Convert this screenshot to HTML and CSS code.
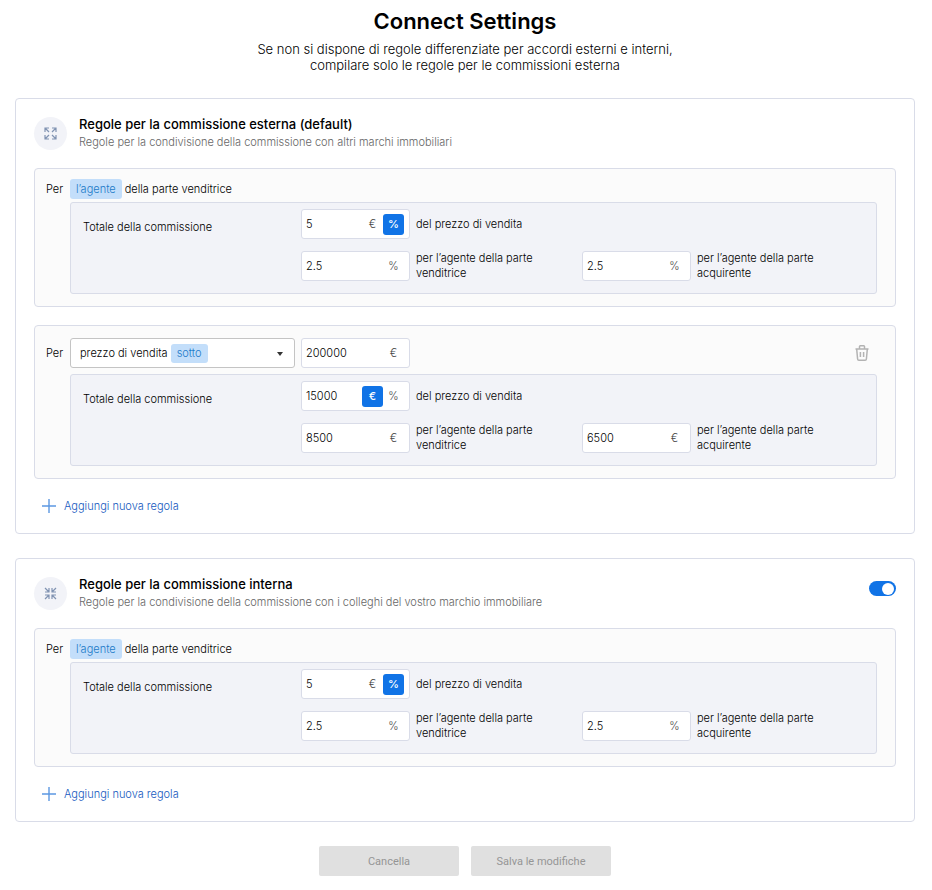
FILE: index.html
```html
<!DOCTYPE html>
<html lang="it">
<head>
<meta charset="utf-8">
<meta name="viewport" content="width=device-width, initial-scale=1">
<title>Connect Settings</title>
<link rel="stylesheet" href="styles.css">
</head>
<body>
<main class="page">
  <header class="intro">
    <h1>Connect Settings</h1>
    <p>Se non si dispone di regole differenziate per accordi esterni e interni,<br>compilare solo le regole per le commissioni esterna</p>
  </header>

  <section class="card">
    <div class="card-head">
      <span class="card-icon">
        <svg width="13" height="13" viewBox="0 0 13 13" aria-hidden="true"><path d="M1 5V1h4M1 1l4 4M8 1h4v4M12 1L8 5M1 8v4h4M1 12l4-4M12 8v4H8M12 12L8 8"/></svg>
      </span>
      <div class="card-titles">
        <h2>Regole per la commissione esterna (default)</h2>
        <p>Regole per la condivisione della commissione con altri marchi immobiliari</p>
      </div>
    </div>

    <div class="rule">
      <div class="rule-head">
        <span class="per">Per</span>
        <span class="chip">l’agente</span>
        <span class="after-chip">della parte venditrice</span>
      </div>
      <div class="panel">
        <label class="panel-label" for="ext1-total">Totale della commissione</label>
        <div class="field total">
          <div class="amount">
            <input id="ext1-total" type="text" value="5">
            <button type="button" class="unit" aria-pressed="false">€</button>
            <button type="button" class="unit active" aria-pressed="true">%</button>
          </div>
          <span class="field-text">del prezzo di vendita</span>
        </div>
        <div class="field seller">
          <div class="amount"><input id="ext1-seller" type="text" value="2.5"><span class="unit">%</span></div>
          <label class="field-text" for="ext1-seller">per l’agente della parte venditrice</label>
        </div>
        <div class="field">
          <div class="amount"><input id="ext1-buyer" type="text" value="2.5"><span class="unit">%</span></div>
          <label class="field-text" for="ext1-buyer">per l’agente della parte acquirente</label>
        </div>
      </div>
    </div>

    <div class="rule">
      <div class="rule-head tall">
        <label class="per" for="condition">Per</label>
        <div class="condition">
          <select id="condition">
            <option selected>prezzo di vendita sotto</option>
            <option>prezzo di vendita sopra</option>
          </select>
          <span class="condition-value" aria-hidden="true">prezzo di vendita <span class="chip small">sotto</span></span>
          <svg class="caret" width="6" height="4" viewBox="0 0 6 4" aria-hidden="true"><path d="M0 0h6L3 4z"/></svg>
        </div>
        <div class="amount"><input type="text" value="200000" aria-label="Prezzo di vendita"><span class="unit">€</span></div>
        <button type="button" class="delete" aria-label="Elimina regola">
          <svg width="14" height="16" viewBox="0 0 14 16" aria-hidden="true"><path d="M.5 4h13M4.5 3.8V1.6q0-.8.8-.8h3.4q.8 0 .8.8v2.2M1.7 4.2l.9 9.8q.1 1.2 1.3 1.2h6.2q1.2 0 1.3-1.2l.9-9.8M5.4 7v5M8.6 7v5"/></svg>
        </button>
      </div>
      <div class="panel">
        <label class="panel-label" for="ext2-total">Totale della commissione</label>
        <div class="field total">
          <div class="amount">
            <input id="ext2-total" type="text" value="15000">
            <button type="button" class="unit active" aria-pressed="true">€</button>
            <button type="button" class="unit" aria-pressed="false">%</button>
          </div>
          <span class="field-text">del prezzo di vendita</span>
        </div>
        <div class="field seller">
          <div class="amount"><input id="ext2-seller" type="text" value="8500"><span class="unit">€</span></div>
          <label class="field-text" for="ext2-seller">per l’agente della parte venditrice</label>
        </div>
        <div class="field">
          <div class="amount"><input id="ext2-buyer" type="text" value="6500"><span class="unit">€</span></div>
          <label class="field-text" for="ext2-buyer">per l’agente della parte acquirente</label>
        </div>
      </div>
    </div>

    <button type="button" class="add">
      <svg width="14" height="14" viewBox="0 0 14 14" aria-hidden="true"><path d="M7 0v14M0 7h14"/></svg>
      Aggiungi nuova regola
    </button>
  </section>

  <section class="card">
    <div class="card-head">
      <span class="card-icon">
        <svg width="13" height="13" viewBox="0 0 13 13" aria-hidden="true"><path d="M5 1v4H1M5 5L1 1M8 1v4h4M8 5l4-4M5 12V8H1M5 8l-4 4M8 12V8h4M8 8l4 4"/></svg>
      </span>
      <div class="card-titles">
        <h2>Regole per la commissione interna</h2>
        <p>Regole per la condivisione della commissione con i colleghi del vostro marchio immobiliare</p>
      </div>
      <input class="switch" type="checkbox" role="switch" checked aria-label="Regole per la commissione interna">
    </div>

    <div class="rule">
      <div class="rule-head">
        <span class="per">Per</span>
        <span class="chip">l’agente</span>
        <span class="after-chip">della parte venditrice</span>
      </div>
      <div class="panel">
        <label class="panel-label" for="int-total">Totale della commissione</label>
        <div class="field total">
          <div class="amount">
            <input id="int-total" type="text" value="5">
            <button type="button" class="unit" aria-pressed="false">€</button>
            <button type="button" class="unit active" aria-pressed="true">%</button>
          </div>
          <span class="field-text">del prezzo di vendita</span>
        </div>
        <div class="field seller">
          <div class="amount"><input id="int-seller" type="text" value="2.5"><span class="unit">%</span></div>
          <label class="field-text" for="int-seller">per l’agente della parte venditrice</label>
        </div>
        <div class="field">
          <div class="amount"><input id="int-buyer" type="text" value="2.5"><span class="unit">%</span></div>
          <label class="field-text" for="int-buyer">per l’agente della parte acquirente</label>
        </div>
      </div>
    </div>

    <button type="button" class="add">
      <svg width="14" height="14" viewBox="0 0 14 14" aria-hidden="true"><path d="M7 0v14M0 7h14"/></svg>
      Aggiungi nuova regola
    </button>
  </section>

  <footer class="actions">
    <button type="button" disabled>Cancella</button>
    <button type="button" disabled>Salva le modifiche</button>
  </footer>
</main>
</body>
</html>
```
FILE: styles.css
```css
* {
  box-sizing: border-box;
}

body {
  margin: 0;
  background: #fff;
  color: #000;
  font-family: Inter, "Liberation Sans", sans-serif;
  font-size: 11px;
  font-weight: 300;
  line-height: 15px;
}

h1, h2, p {
  margin: 0;
}

button, input, select {
  margin: 0;
  padding: 0;
  border: 0;
  background: none;
  color: inherit;
  font: inherit;
}

.page {
  display: flex;
  flex-direction: column;
  gap: 24px;
  padding: 6px 17px 14px 15px;
}

.intro {
  padding-bottom: 1px;
  text-align: center;
}

.intro h1 {
  font-size: 22px;
  font-weight: 600;
  line-height: 30px;
}

.intro p {
  margin-top: 5px;
  font-size: 13px;
  line-height: 16px;
}

.card {
  display: flex;
  flex-direction: column;
  gap: 18px;
  padding: 18px;
  border: 1px solid #d9dce8;
  border-radius: 4px;
}

.card-head {
  display: flex;
  gap: 12px;
}

.card-icon {
  display: flex;
  flex: none;
  align-items: center;
  justify-content: center;
  width: 33px;
  height: 33px;
  border-radius: 50%;
  background: #f2f3f8;
}

.card-icon svg {
  fill: none;
  stroke: #8093b2;
  stroke-width: 1.2;
}

.card-titles {
  flex: 1;
}

.card-titles h2 {
  font-size: 13px;
  font-weight: 500;
  line-height: 14px;
}

.card-titles p {
  margin-top: 4px;
  color: #666;
}

.switch {
  position: relative;
  appearance: none;
  width: 27px;
  height: 15px;
  margin-top: 4px;
  border-radius: 8px;
  background: #b5bac8;
}

.switch:checked {
  background: #1073e6;
}

.switch::before {
  content: "";
  position: absolute;
  top: 2px;
  left: 2px;
  width: 12px;
  height: 12px;
  border-radius: 50%;
  background: #fff;
}

.switch:checked::before {
  left: 13px;
}

.rule {
  padding: 0 18px 12px 11px;
  border: 1px solid #d9dce8;
  border-radius: 4px;
  background: #fbfbfb;
}

.rule-head {
  display: flex;
  align-items: center;
  padding: 10px 0 3px;
}

.rule-head.tall {
  padding: 12px 0 6px;
}

.per {
  width: 24px;
}

.chip {
  padding: 0 6px;
  border-radius: 3px;
  background: #c3defa;
  color: #1c7ac8;
  line-height: 20px;
}

.chip.small {
  margin-left: 3px;
  line-height: 19px;
}

.after-chip {
  margin-left: 3px;
}

.condition {
  position: relative;
  width: 225px;
  height: 30px;
  margin-right: 6px;
}

.condition select {
  appearance: none;
  width: 100%;
  height: 100%;
  border: 1px solid #c4c4c4;
  border-radius: 3px;
  background: #fff;
  color: transparent;
}

.condition option {
  color: #000;
}

.condition-value {
  position: absolute;
  inset: 0 24px 0 10px;
  display: flex;
  align-items: center;
  pointer-events: none;
}

.caret {
  position: absolute;
  top: 14px;
  right: 12px;
  fill: #333;
  pointer-events: none;
}

.delete {
  display: flex;
  margin-left: auto;
  margin-right: 8px;
}

.delete svg {
  fill: none;
  stroke: #b3b3b3;
  stroke-width: 1.5;
}

.panel {
  display: grid;
  grid-template-columns: 218px 1fr 1fr;
  row-gap: 12px;
  margin-left: 24px;
  padding: 6px 13px 12px 12px;
  border: 1px solid #d9dce8;
  border-radius: 3px;
  background: #f2f3f8;
}

.panel-label {
  padding-top: 11px;
}

.total {
  grid-column: 2 / 4;
}

.seller {
  grid-column: 2;
}

.field {
  display: flex;
  align-items: center;
  gap: 6px;
  height: 30px;
}

.field-text {
  max-width: 150px;
}

.amount {
  display: flex;
  flex: none;
  align-items: center;
  width: 109px;
  height: 30px;
  padding: 0 5px 0 4px;
  border: 1px solid #d9dce8;
  border-radius: 3px;
  background: #fff;
}

.amount input {
  flex: 1;
  min-width: 0;
  outline: none;
}

.unit {
  width: 21px;
  height: 21px;
  border-radius: 3px;
  color: #444;
  line-height: 21px;
  text-align: center;
}

.unit.active {
  background: #1073e6;
  color: #fff;
  font-weight: 500;
}

.add {
  display: flex;
  align-items: center;
  align-self: flex-start;
  gap: 8px;
  margin-left: 8px;
  color: #1459be;
  line-height: 18px;
}

.add svg {
  stroke: #5c98e2;
  stroke-width: 1.4;
}

.actions {
  display: flex;
  justify-content: center;
  gap: 12px;
}

.actions button {
  width: 140px;
  height: 30px;
  border-radius: 2px;
  background: #e0e0e0;
  color: #959595;
  font-family: Roboto, "Liberation Sans", sans-serif;
  font-size: 11px;
  font-weight: 400;
}
```
